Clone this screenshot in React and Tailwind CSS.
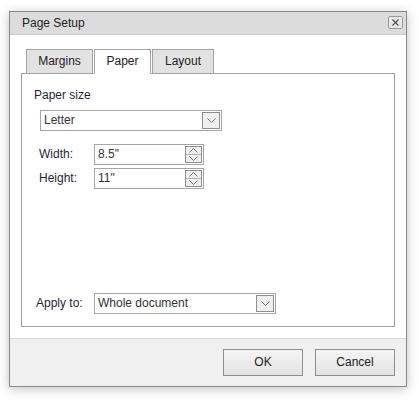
import React from 'react';

const font = { fontFamily: '"Liberation Sans", Arial, sans-serif' };

function Chevron({ up = false }) {
  return (
    <svg width="9" height="5" viewBox="0 0 9 5" className="block">
      <path
        d={up ? 'M0.5 4.5 L4.5 0.5 L8.5 4.5' : 'M0.5 0.5 L4.5 4.5 L8.5 0.5'}
        fill="none"
        stroke="#777"
        strokeWidth="1"
      />
    </svg>
  );
}

function Select({ value, width }) {
  return (
    <div
      className="flex items-center h-[21px] border border-[#a6a6a6] bg-white pl-[3px] pr-[1px]"
      style={{ width }}
    >
      <span className="flex-1 text-[12px] text-[#333] leading-none">{value}</span>
      <div className="w-[18px] h-[17px] border border-[#8f8f8f] bg-[#efefef] flex items-center justify-center">
        <Chevron />
      </div>
    </div>
  );
}

function Spin({ value }) {
  return (
    <div className="flex items-center w-[110px] h-[21px] border border-[#a6a6a6] bg-white pl-[3px] pr-[1px]">
      <span className="flex-1 text-[12px] text-[#333] leading-none">{value}</span>
      <div className="w-[17px] h-[17px] border border-[#8f8f8f] bg-[#efefef] flex flex-col">
        <div className="flex-1 flex items-center justify-center border-b border-[#b5b5b5]">
          <Chevron up />
        </div>
        <div className="flex-1 flex items-center justify-center">
          <Chevron />
        </div>
      </div>
    </div>
  );
}

function Tab({ label, active, width }) {
  return (
    <div
      className={
        'h-[25px] flex items-center justify-center border border-[#a3a3a3] text-[12px] text-[#222] ' +
        (active ? 'bg-white border-b-white relative z-10' : 'bg-[#e2e2e2] mt-0')
      }
      style={{ width }}
    >
      {label}
    </div>
  );
}

export default function App() {
  return (
    <div className="w-[419px] h-[401px] bg-white pt-[11px] pl-[9px]" style={font}>
      <div className="w-[398px] h-[376px] border border-[#8a8a8a] bg-white flex flex-col shadow-[0_2px_10px_rgba(0,0,0,0.25)]">
        {/* title bar */}
        <div className="h-[23px] bg-[#dcdcdc] border-b border-[#c9c9c9] flex items-center pl-[12px] pr-[3px]">
          <span className="flex-1 text-[12px] text-[#222]">Page Setup</span>
          <div className="w-[15px] h-[13px] border border-[#9a9a9a] rounded-[2px] bg-[#e8e8e8] flex items-center justify-center">
            <svg width="7" height="7" viewBox="0 0 7 7" className="block">
              <path d="M0.5 0.5 L6.5 6.5 M6.5 0.5 L0.5 6.5" stroke="#555" strokeWidth="1.2" />
            </svg>
          </div>
        </div>

        {/* body */}
        <div className="flex-1 flex flex-col pt-[14px] pl-[11px] pr-[12px]">
          <div className="flex gap-[1px] pl-[5px] -mb-[1px]">
            <Tab label="Margins" width={67} />
            <Tab label="Paper" width={57} active />
            <Tab label="Layout" width={62} />
          </div>
          <div className="w-[374px] h-[254px] border border-[#a3a3a3] flex flex-col text-[12px] text-[#1f1f3a]">
            <div className="pl-[12px] pt-[13px] leading-[16px]">Paper size</div>
            <div className="pl-[18px] mt-[7px]">
              <Select value="Letter" width={182} />
            </div>
            <div className="flex flex-col gap-[3px] mt-[13px] pl-[17px]">
              <div className="flex items-center">
                <span className="w-[55px]">Width:</span>
                <Spin value={'8.5"'} />
              </div>
              <div className="flex items-center">
                <span className="w-[55px]">Height:</span>
                <Spin value={'11"'} />
              </div>
            </div>
            <div className="flex-1" />
            <div className="flex items-center pl-[14px] mb-[12px]">
              <span className="w-[58px]">Apply to:</span>
              <Select value="Whole document" width={182} />
            </div>
          </div>
        </div>

        {/* footer */}
        <div className="h-[49px] mt-[11px] border-t border-[#dcdcdc] bg-[#f0f0f0] flex justify-end gap-[12px] pt-[10px] pr-[11px]">
          <button className="w-[80px] h-[27px] border border-[#8e8e8e] bg-gradient-to-b from-[#f4f4f4] to-[#e3e3e3] text-[12px] text-[#222]">
            OK
          </button>
          <button className="w-[80px] h-[27px] border border-[#8e8e8e] bg-gradient-to-b from-[#f4f4f4] to-[#e3e3e3] text-[12px] text-[#222]">
            Cancel
          </button>
        </div>
      </div>
    </div>
  );
}
